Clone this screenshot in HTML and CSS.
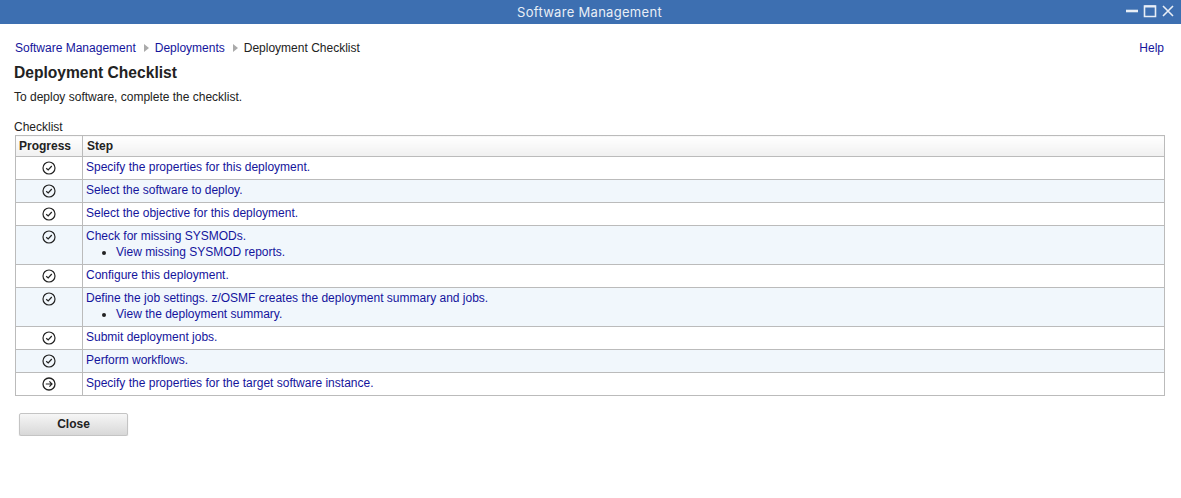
FILE: index.html
```html
<!DOCTYPE html>
<html>
<head lang="en">
    <meta charset="UTF-8">
    <title>Software Management</title>
    <link rel="stylesheet" href="styles.css">
</head>
<body>
<svg class="defs" width="0" height="0">
    <symbol id="done" viewBox="0 0 14 14">
        <circle cx="7" cy="7" r="6" fill="none" stroke="#222" stroke-width="1.2"/>
        <path d="M4.2 7.2 L6.2 9 L9.8 5" fill="none" stroke="#222" stroke-width="1.2"/>
    </symbol>
    <symbol id="current" viewBox="0 0 14 14">
        <circle cx="7" cy="7" r="6" fill="none" stroke="#222" stroke-width="1.3"/>
        <path d="M3.8 7 H9.8 M7.4 4.4 L10 7 L7.4 9.6" fill="none" stroke="#222" stroke-width="1.2"/>
    </symbol>
</svg>
<div class="titlebar">
    <span class="title">Software Management</span>
    <div class="winbtns">
        <svg width="14" height="14" viewBox="0 0 14 14"><path d="M1 7 H13" stroke="#e8eef6" stroke-width="2.6"/></svg>
        <svg width="14" height="14" viewBox="0 0 14 14"><path d="M1.5 2 H12.5 V12.5 H1.5 Z" fill="none" stroke="#e8eef6" stroke-width="1.6"/><path d="M1.5 2.5 H12.5" stroke="#e8eef6" stroke-width="2"/></svg>
        <svg width="14" height="14" viewBox="0 0 14 14"><path d="M2 2 L12 12 M12 2 L2 12" stroke="#e8eef6" stroke-width="1.6"/></svg>
    </div>
</div>
<div class="content">
    <div class="crumbs">
        <a href="#">Software Management</a>
        <span class="sep"></span>
        <a href="#">Deployments</a>
        <span class="sep"></span>
        <span>Deployment Checklist</span>
        <a class="help" href="#">Help</a>
    </div>
    <h1>Deployment Checklist</h1>
    <p class="intro">To deploy software, complete the checklist.</p>
    <div class="caption">Checklist</div>
    <table>
        <thead>
        <tr><th class="prog">Progress</th><th>Step</th></tr>
        </thead>
        <tbody>
        <tr>
            <td class="prog"><svg class="ico"><use href="#done"/></svg></td>
            <td><a href="#">Specify the properties for this deployment.</a></td>
        </tr>
        <tr class="alt">
            <td class="prog"><svg class="ico"><use href="#done"/></svg></td>
            <td><a href="#">Select the software to deploy.</a></td>
        </tr>
        <tr>
            <td class="prog"><svg class="ico"><use href="#done"/></svg></td>
            <td><a href="#">Select the objective for this deployment.</a></td>
        </tr>
        <tr class="alt">
            <td class="prog"><svg class="ico"><use href="#done"/></svg></td>
            <td><a href="#">Check for missing SYSMODs.</a>
                <ul><li><a href="#">View missing SYSMOD reports.</a></li></ul>
            </td>
        </tr>
        <tr>
            <td class="prog"><svg class="ico"><use href="#done"/></svg></td>
            <td><a href="#">Configure this deployment.</a></td>
        </tr>
        <tr class="alt">
            <td class="prog"><svg class="ico"><use href="#done"/></svg></td>
            <td><a href="#">Define the job settings. z/OSMF creates the deployment summary and jobs.</a>
                <ul><li><a href="#">View the deployment summary.</a></li></ul>
            </td>
        </tr>
        <tr>
            <td class="prog"><svg class="ico"><use href="#done"/></svg></td>
            <td><a href="#">Submit deployment jobs.</a></td>
        </tr>
        <tr class="alt">
            <td class="prog"><svg class="ico"><use href="#done"/></svg></td>
            <td><a href="#">Perform workflows.</a></td>
        </tr>
        <tr>
            <td class="prog"><svg class="ico"><use href="#current"/></svg></td>
            <td><a href="#">Specify the properties for the target software instance.</a></td>
        </tr>
        </tbody>
    </table>
    <button class="close">Close</button>
</div>
</body>
</html>
```

FILE: styles.css
```css
* {
    margin: 0;
    padding: 0;
    box-sizing: border-box;
}

body {
    font-family: "Liberation Sans", Arial, sans-serif;
    font-size: 12px;
    color: #222;
    background-color: #fff;
}

a {
    color: #14149c;
    text-decoration: none;
}

.defs {
    display: block;
    height: 0;
}

.titlebar {
    height: 24px;
    padding: 0 2px 1px 0;
    background-color: #3d6fb1;
    color: #e8eef6;
    position: relative;
    display: flex;
    align-items: center;
    justify-content: center;
}

.title {
    font-family: "Inter", "Open Sans", sans-serif;
    font-size: 13px;
    letter-spacing: 0.3px;
}

.winbtns {
    position: absolute;
    right: 6px;
    top: 4px;
    display: flex;
    gap: 4px;
}

.content {
    padding: 17px 17px 0 15px;
}

.crumbs {
    display: flex;
    align-items: center;
    height: 14px;
}

.sep {
    width: 0;
    height: 0;
    margin: 0 6px 0 8px;
    border-left: 5px solid #aaa;
    border-top: 4px solid transparent;
    border-bottom: 4px solid transparent;
}

.help {
    margin-left: auto;
}

h1 {
    font-size: 15.6px;
    line-height: 20px;
    margin-top: 8px;
    margin-left: -1px;
}

.intro {
    line-height: 14px;
    margin-top: 7px;
    margin-left: -1px;
}

.caption {
    line-height: 14px;
    margin-top: 16px;
    margin-left: -1px;
}

table {
    width: 1150px;
    margin-top: 1px;
    border-collapse: collapse;
    table-layout: fixed;
}

th,
td {
    border: 1px solid #bbb;
    text-align: left;
    vertical-align: top;
    padding: 3px 3px 0 3px;
    line-height: 15px;
}

th {
    height: 21px;
    padding-left: 4px;
    background: linear-gradient(#fff, #f0f0f0);
    font-weight: bold;
}

td {
    height: 23px;
}

.prog {
    width: 67px;
}

th.prog {
    padding-left: 3px;
    padding-right: 0;
}

td.prog {
    text-align: center;
    padding-top: 4px;
}

.alt td {
    background-color: #f1f7fc;
}

.ico {
    display: inline-block;
    width: 14px;
    height: 14px;
    vertical-align: top;
}

td ul {
    list-style: disc;
    padding-left: 30px;
    padding-bottom: 4px;
    line-height: 16px;
}

.close {
    display: block;
    width: 109px;
    height: 23px;
    padding-bottom: 2px;
    margin: 17px 0 0 4px;
    font-family: "Liberation Sans", Arial, sans-serif;
    font-size: 12px;
    font-weight: bold;
    color: #222;
    border: 1px solid #c4c4c4;
    border-radius: 2px;
    background: linear-gradient(#f6f6f6, #d8d8d8);
    box-shadow: 0 1px 1px #ccc;
}
```
